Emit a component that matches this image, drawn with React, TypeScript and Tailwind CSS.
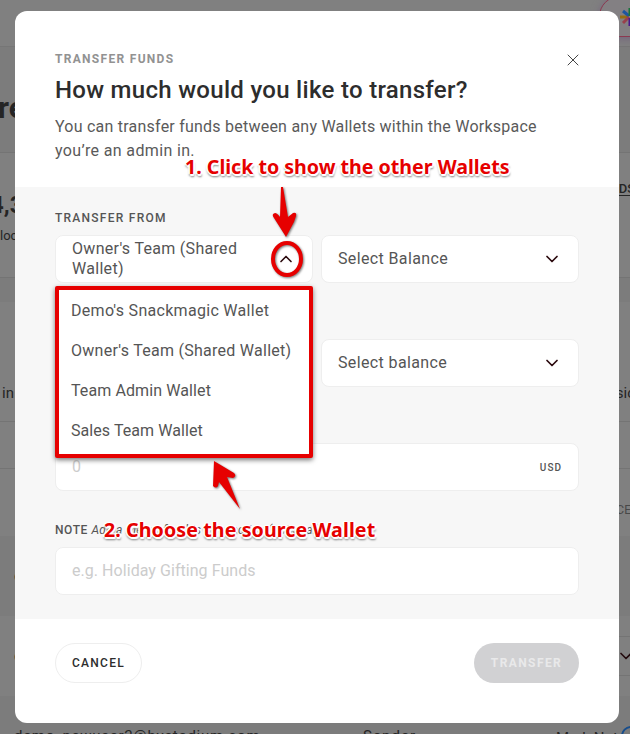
import { ChevronDown, ChevronUp, X } from 'lucide-react'

const wallets = [
  { name: "Demo's Snackmagic Wallet", className: 'tracking-[0.3px]' },
  { name: "Owner's Team (Shared Wallet)", className: 'tracking-[0.27px]' },
  { name: 'Team Admin Wallet', className: 'tracking-[0.1px]' },
  { name: 'Sales Team Wallet', className: 'tracking-[0.07px]' },
]

function PageBehind() {
  return (
    <div className="flex h-full flex-col overflow-hidden whitespace-nowrap bg-[#7c7c7c] text-[#252525]">
      <header className="flex h-[47px] shrink-0 justify-end border-b border-[#767676] bg-[#808080]">
        <div className="-mt-1 -mr-[53px] flex h-[41px] w-[84px] items-center rounded-full border border-[#8c3950] bg-[#838083] pl-[20px] shadow-[0_2px_8px_#75647d]">
          <svg className="size-5 shrink-0" viewBox="0 0 20 20" fill="none" strokeWidth="3">
            <path d="M0 10h8" stroke="#956d12" />
            <path d="m3 4 6 5" stroke="#1c55a0" />
            <path d="m3 16 6-6" stroke="#99404c" />
            <path d="M10 1v8" stroke="#16733a" />
            <path d="M10 11v8" stroke="#4b168a" />
          </svg>
        </div>
      </header>
      <div className="flex h-[105px] shrink-0 items-center pl-px">
        <span className="-ml-[3px] pt-4 text-[30px] font-bold">re</span>
      </div>
      <div className="flex h-[126px] shrink-0 justify-between border-y border-[#747474] bg-[#808080]">
        <div className="pt-[36px]">
          <div className="-ml-[10px] text-[24px] font-bold leading-8">4,3</div>
          <div className="mt-[3px] text-[13px] leading-6">loc</div>
        </div>
        <div className="-mr-[5px] mt-[28px] h-[15px] border-b border-[#252525] text-[13px] font-medium leading-4">DS</div>
      </div>
      <div className="h-[24px] shrink-0" />
      <div className="flex h-[120px] shrink-0 items-end justify-between border-b border-[#747474] bg-[#808080] pb-[16px] text-[15px] leading-6">
        <span className="pl-0.5">in</span>
        <span className="-mr-[5px]">sic</span>
      </div>
      <div className="h-[47px] shrink-0 border-b border-[#747474] bg-[#808080]" />
      <div className="flex h-[67px] shrink-0 justify-end bg-[#808080] pt-[33px] text-[12px] leading-4 text-[#484848]">
        <span className="-mr-px">CE</span>
      </div>
      <div className="flex h-[80px] shrink-0 items-center pl-[14px] text-[15px]">d</div>
      <div className="flex h-[80px] shrink-0 items-center justify-between bg-[#808080] pl-[14px] text-[15px]">
        <span>d</span>
        <div className="-mr-1.5 flex h-10 w-10 items-center justify-end border-y border-[#747474]">
          <ChevronDown className="size-5 text-[#22090c]" />
        </div>
      </div>
      <div className="flex h-[80px] shrink-0 pt-[28px] text-[15px] leading-6">
        <span className="w-[349px] shrink-0 pl-[14px] tracking-[0.73px]">demo_newuser2@hystadium.com</span>
        <span className="w-[192px] shrink-0 pl-[14px] tracking-[1.1px]">Sender</span>
        <span className="w-[80px] shrink-0 pt-[2px] pl-[15px]">Mark Not</span>
        <span className="mt-0.5 size-5 shrink-0 rounded-full border-2 border-[#174d8c]" />
      </div>
    </div>
  )
}

function Select({ label }: { label: string }) {
  return (
    <button className="flex h-12 items-center justify-between rounded-lg border border-[#eeeeee] bg-white px-4 text-left text-[16px] tracking-[0.37px] text-[#555]">
      {label}
      <ChevronDown className="size-5 text-[#2b0a0e]" strokeWidth={2.1} />
    </button>
  )
}

function Callout({ children }: { children: string }) {
  return (
    <span className="whitespace-nowrap font-['Noto_Sans'] text-[19.6px] font-bold leading-6 text-[#e60000] [text-shadow:-1px_-1px_1px_#fff,1px_-1px_1px_#fff,-2px_0_1px_#fff,2px_0_1px_#fff,0_2px_1px_#fff,1px_2px_1px_#fff,1px_3px_2px_#777,-1px_2px_2px_#999]">
      {children}
    </span>
  )
}

function Modal() {
  return (
    <div className="flex h-[712px] w-[604px] flex-col overflow-hidden rounded-[12px] bg-white">
      <div className="h-44 shrink-0 px-10 pt-[39px]">
        <div className="flex h-[17px] items-start justify-between">
          <p className="pt-px text-[12px] font-bold leading-4 tracking-[1.3px] text-[#929292]">TRANSFER FUNDS</p>
          <X className="-mr-1 size-5 text-[#444]" strokeWidth={1.2} />
        </div>
        <h1 className="mt-[7px] text-[24px] font-medium leading-8 tracking-[0.3px] text-[#2d2d2d]">
          How much would you like to transfer?
        </h1>
        <p className="mt-[9px] whitespace-nowrap text-[16px] leading-6 tracking-[0.23px] text-[#5a5a5a]">
          You can transfer funds between any Wallets within the Workspace
          <br />
          <span className="tracking-[0.35px]">you’re an admin in.</span>
        </p>
      </div>

      <div className="flex h-[432px] shrink-0 flex-col bg-[#f7f7f7] px-10 pt-[23px]">
        <p className="text-[12px] font-medium leading-4 tracking-[1.25px] text-[#555]">TRANSFER FROM</p>
        <div className="mt-[9px] grid grid-cols-2 gap-2">
          <div className="relative">
            <button className="flex h-12 w-full items-center justify-between rounded-lg border border-[#eeeeee] bg-white px-4 text-left text-[16px] leading-5 tracking-[0.3px] text-[#555]">
              <span>
                Owner's Team (Shared
                <br />
                Wallet)
              </span>
              <ChevronUp className="size-5 text-[#2b0a0e]" strokeWidth={2} />
            </button>
            <ul className="absolute top-[51px] left-0 h-[172px] w-[258px] rounded-[2px] border-4 border-[#e60000] bg-white px-3 pt-[1px] text-[16px] leading-10 whitespace-nowrap text-[#555] shadow-[0_2px_5px_#777]">
              {wallets.map((w) => (
                <li key={w.name} className={w.className}>
                  {w.name}
                </li>
              ))}
            </ul>
          </div>
          <Select label="Select Balance" />
        </div>
        <div className="mt-14 grid grid-cols-2 gap-2">
          <div />
          <Select label="Select balance" />
        </div>
        <div className="mt-14 flex h-12 items-center justify-between rounded-lg border border-[#eeeeee] bg-white px-4">
          <span className="text-[16px] text-[#ccc]">0</span>
          <span className="text-[10px] font-medium tracking-[1px] text-[#555]">USD</span>
        </div>
        <p className="mt-[31px] text-[12px] font-medium leading-4 tracking-[0.6px] text-[#555]">
          NOTE <i className="font-normal tracking-[0.2px]">Add a memo for this transaction (optional)</i>
        </p>
        <div className="mt-[9px] flex h-12 shrink-0 items-center rounded-lg border border-[#eeeeee] bg-white px-4 text-[16px] tracking-[0.05px] text-[#ccc]">
          e.g. Holiday Gifting Funds
        </div>
      </div>

      <div className="flex justify-between px-10 pt-6">
        <button className="h-10 w-[87px] rounded-full border border-[#eee] text-[12px] font-medium tracking-[1.3px] text-[#2d2d2d]">
          CANCEL
        </button>
        <button className="h-10 w-[105px] rounded-full bg-[#d1d1d3] text-[12px] font-bold tracking-[1.4px] text-[#e9e9ea]">
          TRANSFER
        </button>
      </div>
    </div>
  )
}

export default function App() {
  return (
    <div className="relative h-[734px] w-[630px] overflow-hidden font-['Roboto',sans-serif]">
      <PageBehind />
      <div className="absolute top-[11px] left-[15px]">
        <Modal />
      </div>

      {/* tutorial annotations on top of the dialog */}
      <div className="absolute top-[155px] left-[185px]">
        <Callout>1. Click to show the other Wallets</Callout>
      </div>
      <div className="absolute top-[518px] left-[104px] tracking-[0.1px]">
        <Callout>2. Choose the source Wallet</Callout>
      </div>
      <svg className="absolute inset-0 drop-shadow-[1px_1px_1px_#777]" width="630" height="734" viewBox="0 0 630 734">
        <g fill="#e60000">
          <path d="M281 187h2l5 30 5-4q4-1 3 3l-2 6-8 15-12-19q-3-4 1-5 2 0 5 4z" />
          <path d="m214 461 20 12q3 3-1 5l-6-1 13 32-21-27-1 4q-2 3-5 0z" />
        </g>
        <ellipse cx="287" cy="259" rx="14" ry="16" fill="none" stroke="#e60000" strokeWidth="4" />
      </svg>
    </div>
  )
}
